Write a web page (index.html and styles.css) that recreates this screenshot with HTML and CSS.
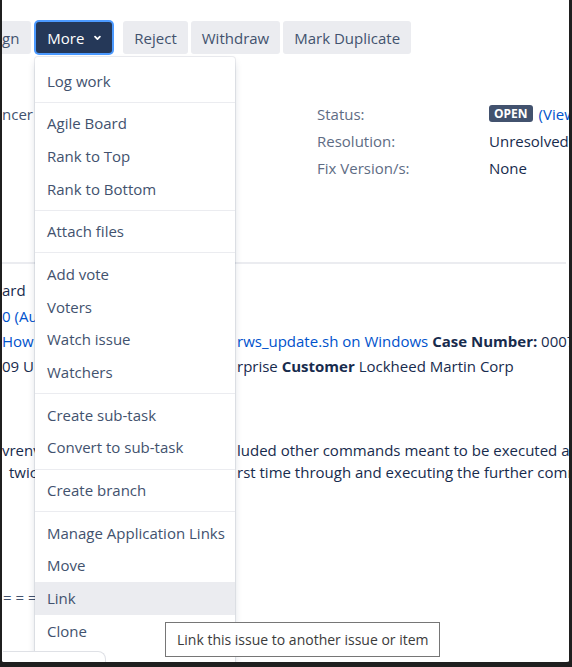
FILE: index.html
```html
<!DOCTYPE html>
<html lang="en">
<head>
<meta charset="utf-8">
<title>Issue - More menu</title>
<link rel="stylesheet" href="styles.css">
</head>
<body>
<div class="frame">
  <div class="toolbar">
    <span class="btn btn-cut">gn</span>
    <span class="btn btn-primary">More
      <svg class="chev" width="10" height="8" viewBox="0 0 10 8"><path d="M1.5 2 L5 5.5 L8.5 2" fill="none" stroke="#fff" stroke-width="2.6" stroke-linecap="round" stroke-linejoin="round"/></svg>
    </span>
    <span class="btn">Reject</span>
    <span class="btn">Withdraw</span>
    <span class="btn">Mark Duplicate</span>
  </div>

  <div class="details">
    <div class="frag muted">ncer</div>
    <div class="label">Status:</div>
    <div class="value"><span class="lozenge">OPEN</span><span class="link view">(View Workflow)</span></div>
    <div></div>
    <div class="label">Resolution:</div>
    <div class="value">Unresolved</div>
    <div></div>
    <div class="label">Fix Version/s:</div>
    <div class="value">None</div>
  </div>

  <div class="divider"></div>

  <div class="content">
    <div class="line first">ard</div>
    <div class="line second link">0 (Au</div>
    <div class="split">
      <span class="link">How</span>
      <span><span class="link">rws_update.sh on Windows</span> <b>Case Number:</b> 00076543</span>
    </div>
    <div class="split">
      <span>09 U</span>
      <span>rprise <b>Customer</b> Lockheed Martin Corp</span>
    </div>
    <div class="para">
      <div class="split tight"><span>vrenv</span><span>luded other commands meant to be executed after it</span></div>
      <div class="split tight"><span class="indent">twic</span><span>rst time through and executing the further commands</span></div>
    </div>
    <div class="line equals">= = =</div>
  </div>

  <div class="menu">
    <ul class="section"><li>Log work</li></ul>
    <ul class="section"><li>Agile Board</li><li>Rank to Top</li><li>Rank to Bottom</li></ul>
    <ul class="section"><li>Attach files</li></ul>
    <ul class="section"><li>Add vote</li><li>Voters</li><li>Watch issue</li><li>Watchers</li></ul>
    <ul class="section"><li>Create sub-task</li><li>Convert to sub-task</li></ul>
    <ul class="section"><li>Create branch</li></ul>
    <ul class="section"><li>Manage Application Links</li><li>Move</li><li class="active">Link</li><li>Clone</li><li>Labels</li></ul>
  </div>

  <div class="footer-box"></div>

  <div class="tooltip">Link this issue to another issue or item</div>
</div>
</body>
</html>
```

FILE: styles.css
```css
* { box-sizing: border-box; }

html, body {
  margin: 0;
  padding: 0;
  background: #1f1f1f;
}

body {
  font-family: "Open Sans", "Noto Sans", sans-serif;
  font-size: 15px;
  color: #172b4d;
}

.frame {
  position: relative;
  width: 572px;
  height: 667px;
  background: #fff;
  border-left: 2px solid #1f1f1f;
  border-right: 3px solid #1f1f1f;
  border-bottom: 5px solid #1f1f1f;
  border-radius: 0 0 6px 6px;
  overflow: hidden;
  white-space: nowrap;
}

/* toolbar */
.toolbar {
  display: flex;
  align-items: center;
  padding-top: 21px;
  height: 54px;
}

.btn {
  display: inline-flex;
  align-items: center;
  height: 33px;
  padding: 0 11px;
  background: #ebecf0;
  color: #42526e;
  border-radius: 3px;
  font-size: 15px;
  margin-right: 3px;
}

.btn-cut {
  padding: 0 12px 0 0;
  border-radius: 0 3px 3px 0;
  margin-right: 5px;
}

.btn-primary {
  background: #253858;
  color: #fff;
  height: 31px;
  width: 76px;
  padding-left: 11px;
  box-shadow: 0 0 0 2px #4c9aff;
  margin-right: 11px;
}

.chev {
  margin-left: 10px;
}

/* details */
.details {
  display: grid;
  grid-template-columns: 315px 172px 1fr;
  grid-auto-rows: 27px;
  align-items: center;
  margin-top: 46px;
}

.frag.muted { color: #42526e; }

.label { color: #5e6c84; }

.value {
  color: #172b4d;
  display: flex;
  align-items: center;
}

.lozenge {
  display: inline-block;
  background: #42526e;
  color: #fff;
  font-weight: 700;
  font-size: 12px;
  line-height: 17px;
  padding: 0 5px;
  border-radius: 3px;
}

.view { margin-left: 6px; }

.link { color: #0052cc; }

.divider {
  height: 2px;
  background: #ebecf0;
  margin: 81px 3px 0 0;
}

/* content */
.content .line,
.content .split {
  line-height: 25px;
}

.split {
  display: grid;
  grid-template-columns: 235px auto;
}

.line.first { margin-top: 14px; }
.line.second { margin-top: 1px; }

.para { margin-top: 60px; }
.split.tight { line-height: 22px; }
.indent { padding-left: 7px; }

.line.equals {
  margin-top: 103px;
  line-height: 22px;
  padding-left: 1px;
  color: #42526e;
}

b { font-weight: 700; }

/* dropdown menu (overlay) */
.menu {
  position: absolute;
  left: 33px;
  top: 57px;
  width: 200px;
  height: 640px;
  background: #fff;
  border-radius: 3px;
  padding-top: 3px;
  box-shadow: 0 0 0 1px rgba(9, 30, 66, 0.08), 0 4px 8px -2px rgba(9, 30, 66, 0.25);
  z-index: 2;
}

.section {
  list-style: none;
  margin: 0;
  padding: 4.5px 0;
  border-top: 1px solid #ebecf0;
}

.section:first-child { border-top: 0; }

.section li {
  height: 32.7px;
  line-height: 32.7px;
  padding: 0 12px;
  color: #42526e;
  font-size: 15px;
}

.section li.active { background: #ebecf0; }

/* footer box overlay */
.footer-box {
  position: absolute;
  left: 1px;
  top: 651px;
  width: 103px;
  height: 40px;
  background: #fff;
  border-top: 1px solid #dfe1e6;
  border-right: 1px solid #dfe1e6;
  border-top-right-radius: 8px;
  z-index: 3;
}

/* native tooltip overlay */
.tooltip {
  position: absolute;
  left: 163px;
  top: 622px;
  width: 275px;
  height: 35px;
  background: #fff;
  border: 1px solid #767676;
  color: #3b3b3b;
  font-size: 14px;
  line-height: 33px;
  padding: 0 11px;
  z-index: 4;
}
```
